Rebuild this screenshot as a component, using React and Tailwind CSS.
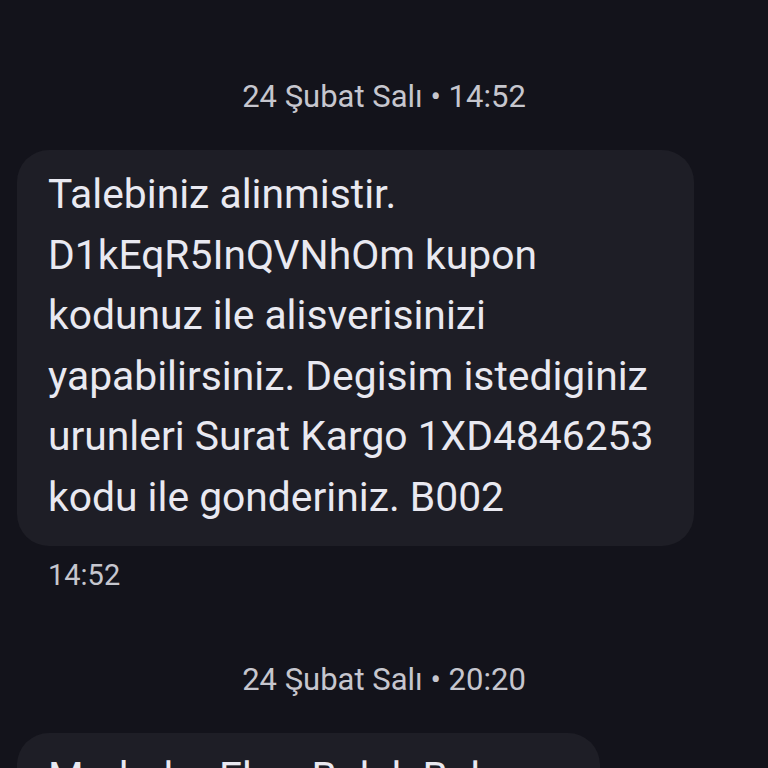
import React from "react";

export default function App() {
  const font = { fontFamily: "Roboto, 'Noto Sans', sans-serif" };
  return (
    <div
      className="w-full h-[768px] overflow-hidden bg-[#13131b] flex flex-col"
      style={font}
    >
      <div className="ml-[30px] w-[660px] h-[13px] rounded-b-[30px] bg-[#1e1e26]" />
      <div className="mt-[79px] text-center text-[31px] leading-[36px] text-[#c6c6ce]">
        24 Şubat Salı • 14:52
      </div>
      <div className="mt-[35px] ml-[17px] w-[677px] rounded-[32px] bg-[#1e1e26] pl-[31px] pt-[14px] pb-[19px] text-[40.8px] leading-[60.5px] text-[#e9e9f1] whitespace-nowrap">
        Talebiniz alinmistir.
        <br />
        D1kEqR5InQVNhOm kupon
        <br />
        kodunuz ile alisverisinizi
        <br />
        yapabilirsiniz. Degisim istediginiz
        <br />
        urunleri Surat Kargo 1XD4846253
        <br />
        kodu ile gonderiniz. B002
      </div>
      <div className="mt-[11px] ml-[48px] text-[29px] leading-[36px] text-[#c6c6ce]">
        14:52
      </div>
      <div className="mt-[69px] text-center text-[31px] leading-[36px] text-[#c6c6ce]">
        24 Şubat Salı • 20:20
      </div>
      <div className="mt-[35px] ml-[17px] w-[583px] rounded-[32px] bg-[#1e1e26] pl-[31px] pt-[14px] pb-[19px] text-[40.8px] leading-[60.5px] text-[#e9e9f1] whitespace-nowrap">
        Merhaba Ebru Buluk Bal
        <br />
        devam
      </div>
    </div>
  );
}
